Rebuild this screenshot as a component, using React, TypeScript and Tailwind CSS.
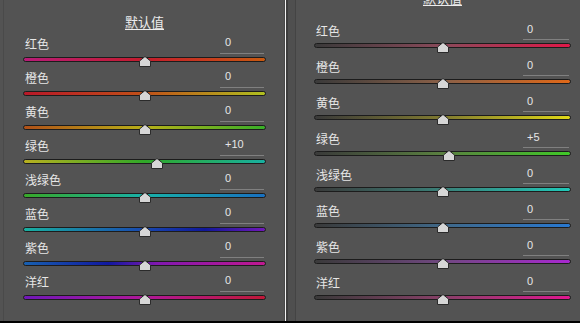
type Row = { label: string; value: number; track: string };

const leftRows: Row[] = [
  { label: '红色', value: 0, track: 'bg-[linear-gradient(to_right,#b81c78,#c41c2c_50%,#c85a10)]' },
  { label: '橙色', value: 0, track: 'bg-[linear-gradient(to_right,#b81828,#c05018_50%,#b0c020)]' },
  { label: '黄色', value: 0, track: 'bg-[linear-gradient(to_right,#b05018,#b8b018_50%,#38b028)]' },
  { label: '绿色', value: 10, track: 'bg-[linear-gradient(to_right,#b8b020,#30a828_50%,#18b0a0)]' },
  { label: '浅绿色', value: 0, track: 'bg-[linear-gradient(to_right,#38a828,#18b0a8_50%,#1870c0)]' },
  { label: '蓝色', value: 0, track: 'bg-[linear-gradient(to_right,#18b0a0,#1848b0_50%,#101898_75%,#7018b8)]' },
  { label: '紫色', value: 0, track: 'bg-[linear-gradient(to_right,#1860b0,#1018a0_35%,#8018b0_55%,#c01890)]' },
  { label: '洋红', value: 0, track: 'bg-[linear-gradient(to_right,#7018b8,#b01898_50%,#c01838)]' },
];

const rightRows: Row[] = [
  { label: '红色', value: 0, track: 'bg-[linear-gradient(to_right,#3a3a3a,#8a4a5a_50%,#e01848)]' },
  { label: '橙色', value: 0, track: 'bg-[linear-gradient(to_right,#3a3a3a,#8a6048_50%,#e06818)]' },
  { label: '黄色', value: 0, track: 'bg-[linear-gradient(to_right,#3a3a3a,#807a30_50%,#e0d818)]' },
  { label: '绿色', value: 5, track: 'bg-[linear-gradient(to_right,#3a3a3a,#5a8040_50%,#40c828)]' },
  { label: '浅绿色', value: 0, track: 'bg-[linear-gradient(to_right,#3a3a3a,#3a8078_50%,#20c8b8)]' },
  { label: '蓝色', value: 0, track: 'bg-[linear-gradient(to_right,#3a3a3a,#406888_50%,#2878d0)]' },
  { label: '紫色', value: 0, track: 'bg-[linear-gradient(to_right,#3a3a3a,#704880_50%,#a828d0)]' },
  { label: '洋红', value: 0, track: 'bg-[linear-gradient(to_right,#3a3a3a,#884068_50%,#e01890)]' },
];

const cjk = "font-['Noto_Sans_CJK_SC',sans-serif]";
const num = "font-['Liberation_Sans',sans-serif]";

const fmt = (v: number) => (v > 0 ? `+${v}` : `${v}`);

const Thumb = ({ value }: { value: number }) => (
  <svg
    width="12"
    height="11"
    viewBox="0 0 12 11"
    className="absolute top-[-2px]"
    style={{ left: `calc(${50 + value / 2}% - 6px)` }}
  >
    <polygon points="6,0.5 11.5,5 11.5,10.5 0.5,10.5 0.5,5" fill="#d6d6d6" stroke="#2a2a2a" strokeWidth="1" />
  </svg>
);

const Slider = ({ row, tall }: { row: Row; tall?: boolean }) => (
  <div className={tall ? 'h-[36px]' : 'h-[34px]'}>
    <div className={`flex items-start justify-between ${tall ? 'h-[17px]' : 'h-[18px]'}`}>
      <span className={`${cjk} pl-[2px] text-[12px] leading-[15px] text-[#e6e6e6]`}>{row.label}</span>
      <div
        className={`${num} h-full border-b border-[#808080] text-[11px] leading-[13px] text-[#e6e6e6] ${
          tall ? 'mr-[2px] w-[46px] pl-[4px]' : 'mr-[2px] w-[44px] pl-[5px]'
        }`}
      >
        {fmt(row.value)}
      </div>
    </div>
    <div className={`relative mt-[3px] h-[5px] rounded-full border border-[#1c1c1c] ${row.track}`}>
      <Thumb value={row.value} />
    </div>
  </div>
);

export default function App() {
  return (
    <div className="flex h-[323px] w-[580px] flex-col overflow-hidden bg-[#535353]">
      <div className="flex h-[321px]">
        {/* left panel */}
        <div className="flex w-[285px] border-r border-[#474747]">
          <div className="ml-[3px] w-px bg-[#4a4a4a]" />
          <div className="flex-1 pl-[19px] pr-[18px]">
            <div className="h-[36px] pt-[9px] text-center">
              <span className={`${cjk} text-[13px] leading-[16px] text-[#ececec] underline underline-offset-2`}>
                默认值
              </span>
            </div>
            {leftRows.map(row => (
              <Slider key={row.label} row={row} />
            ))}
          </div>
        </div>
        <div className="w-px bg-[#f2f2f2]" />
        {/* right panel */}
        <div className="flex flex-1">
          <div className="w-[2px] bg-[#3d3d3d]" />
          <div className="w-[7px] bg-[#4f4f4f]" />
          <div className="w-px bg-[#444444]" />
          <div className="flex-1 pl-[18px] pr-[9px]">
            <div className="h-[23px] overflow-hidden text-center">
              <div
                className={`${cjk} -mt-[10px] text-[13px] leading-[16px] text-[#ececec] underline underline-offset-2`}
              >
                默认值
              </div>
            </div>
            {rightRows.map(row => (
              <Slider key={row.label} row={row} tall />
            ))}
          </div>
        </div>
      </div>
      <div className="h-[2px] bg-black" />
    </div>
  );
}
